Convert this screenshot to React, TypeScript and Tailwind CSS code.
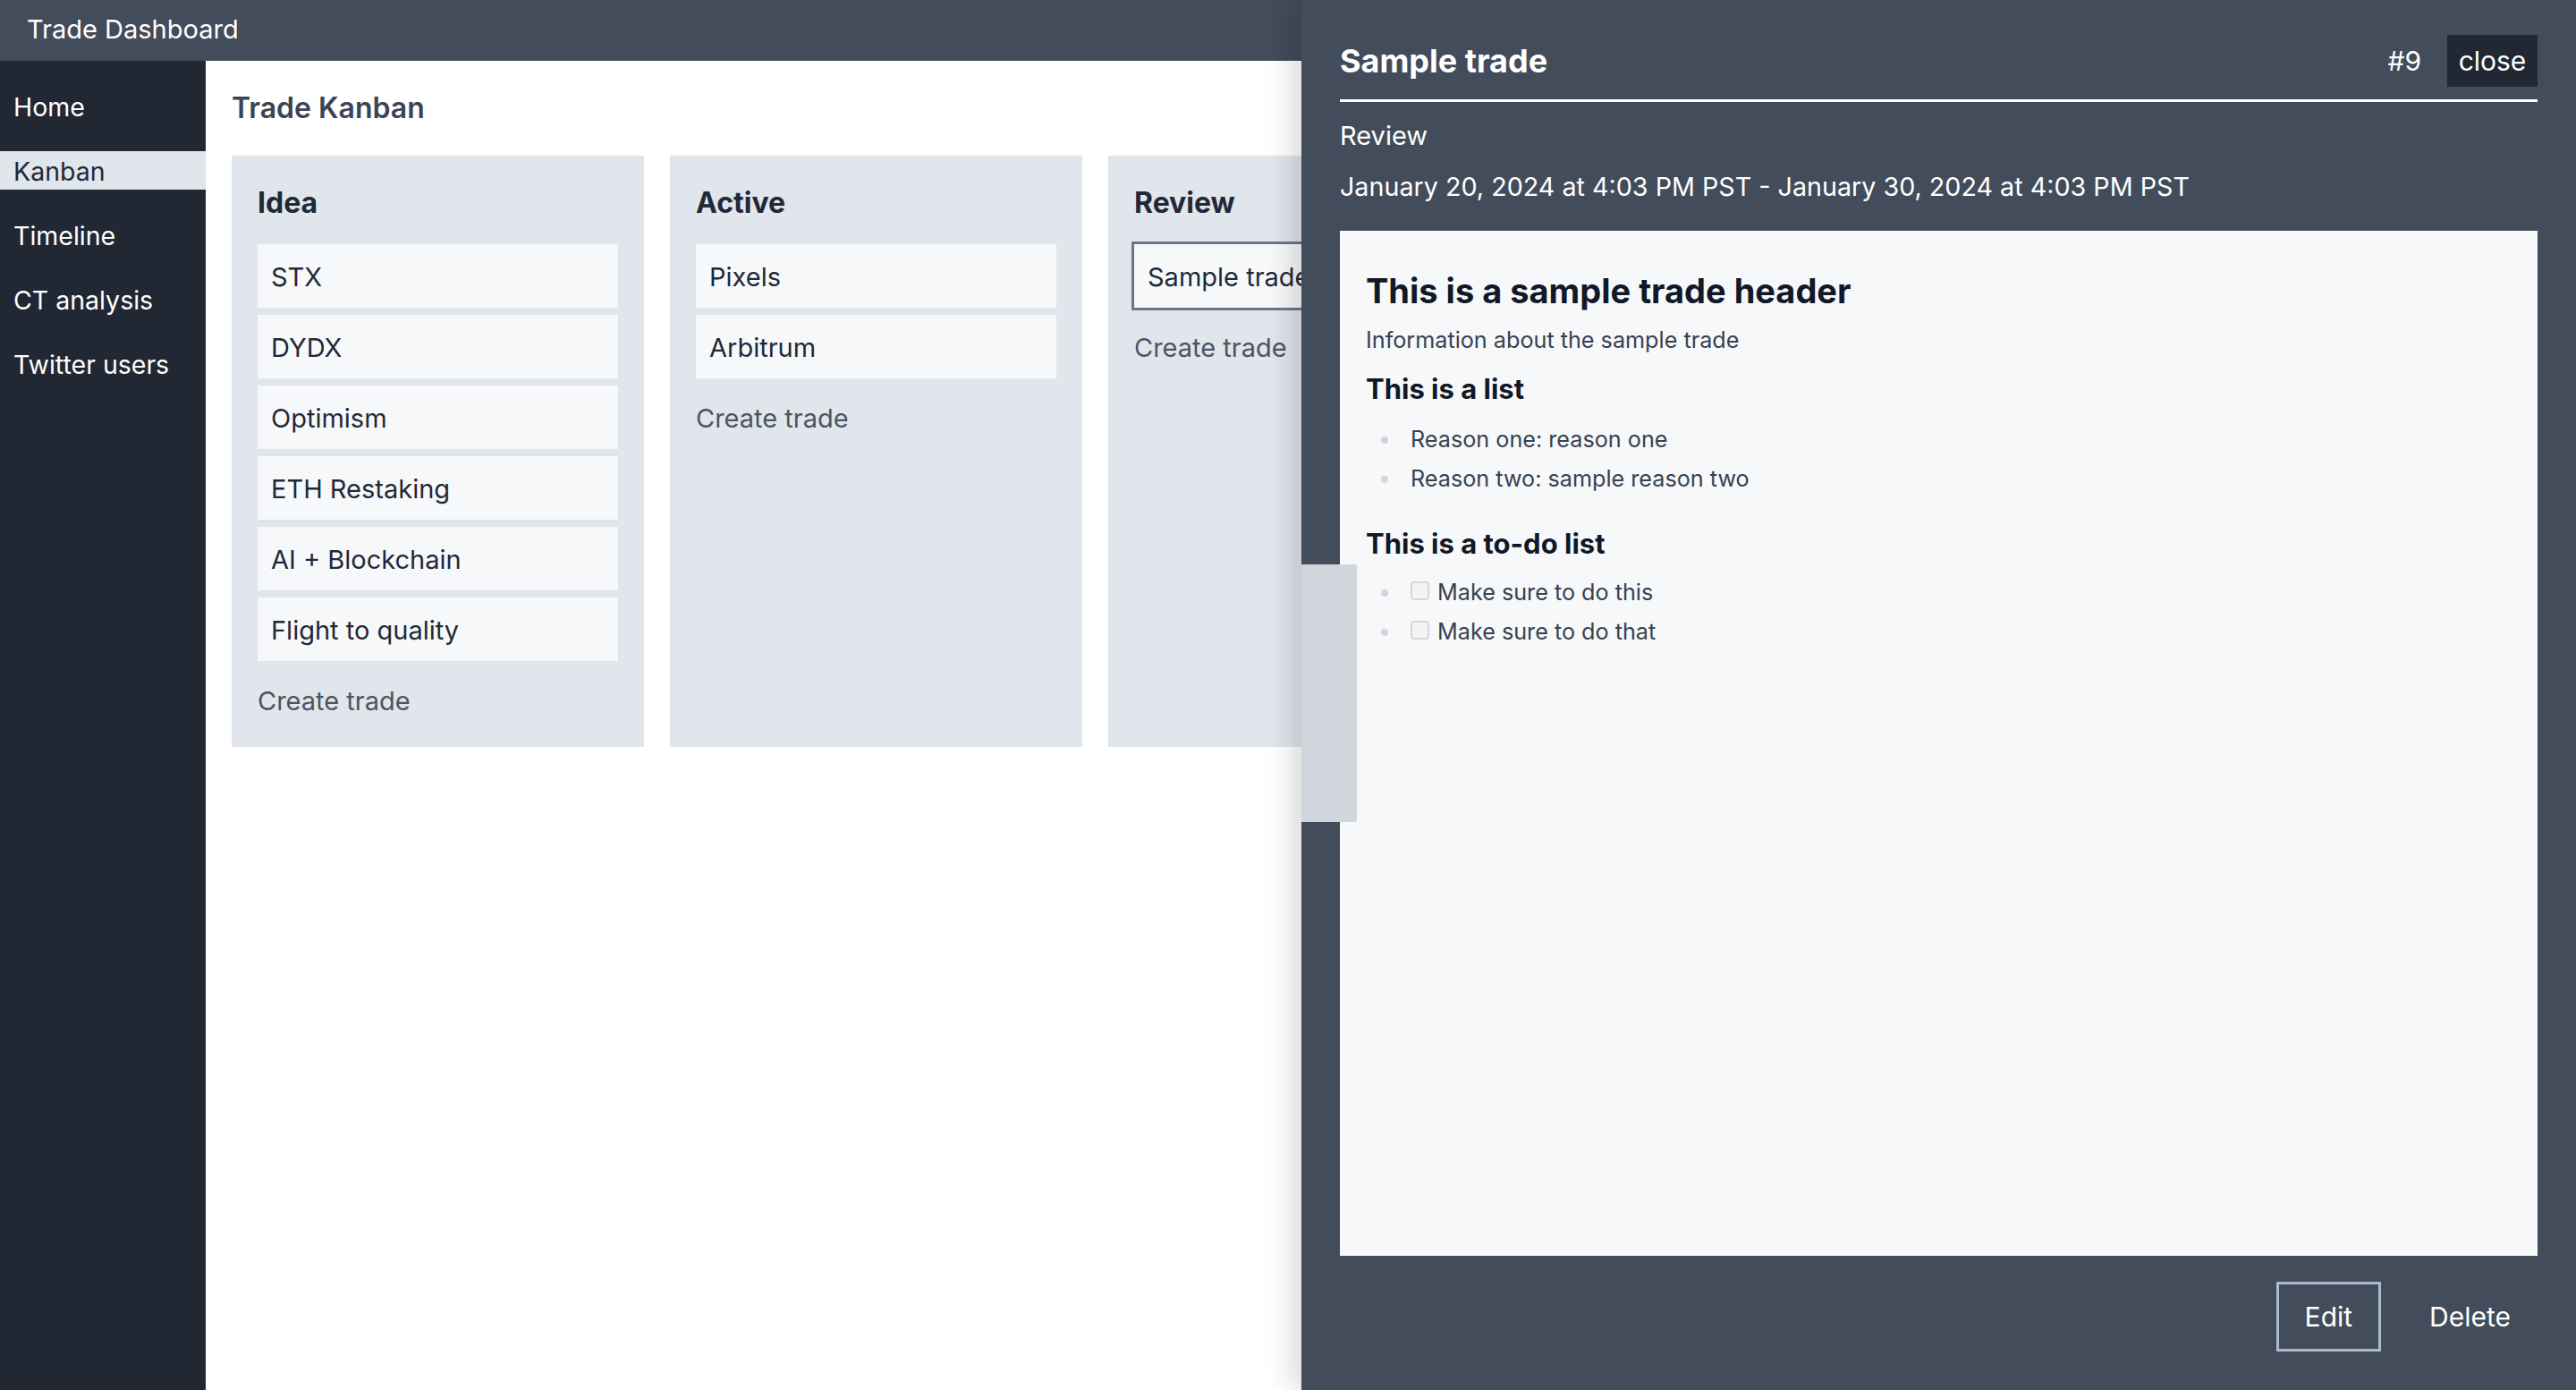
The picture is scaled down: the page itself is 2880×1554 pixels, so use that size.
import type { ReactNode } from 'react'

const navItems = ['Home', 'Kanban', 'Timeline', 'CT analysis', 'Twitter users']

interface Column {
  title: string
  trades: string[]
  selected?: string
}

const columns: Column[] = [
  {
    title: 'Idea',
    trades: ['STX', 'DYDX', 'Optimism', 'ETH Restaking', 'AI + Blockchain', 'Flight to quality'],
  },
  { title: 'Active', trades: ['Pixels', 'Arbitrum'] },
  { title: 'Review', trades: ['Sample trade'], selected: 'Sample trade' },
]

function Sidebar() {
  return (
    <nav className="w-[230px] shrink-0 bg-[#212833] pt-[29px] flex flex-col gap-[29px]">
      {navItems.map((item) => (
        <div
          key={item}
          className={
            item === 'Kanban'
              ? 'h-[43px] leading-[45px] pl-[15px] text-[28.5px] bg-[#e1e5ec] text-[#1f2937]'
              : 'h-[43px] leading-[45px] pl-[15px] text-[28.5px] text-white'
          }
        >
          {item}
        </div>
      ))}
    </nav>
  )
}

function KanbanColumn({ column }: { column: Column }) {
  return (
    <div className="w-[461px] shrink-0 bg-[#e1e5ec] p-[29px]">
      <h2 className="h-[45px] leading-[48px] mb-[25px] text-[32px] font-bold text-[#1f2937]">
        {column.title}
      </h2>
      <div className="flex flex-col gap-[8px]">
        {column.trades.map((t) => (
          <div
            key={t}
            className={
              column.selected === t
                ? 'h-[71px] flex items-center px-[15px] pt-[2px] bg-[#f7f8fa] text-[29px] text-[#1f2937] ring-[3px] ring-[#6b7787]'
                : 'h-[71px] flex items-center px-[15px] pt-[2px] bg-[#f7f8fa] text-[29px] text-[#1f2937]'
            }
          >
            {t}
          </div>
        ))}
      </div>
      <div className="mt-[23px] h-[44px] leading-[44px] text-[29px] text-[#4b5563]">Create trade</div>
    </div>
  )
}

function Bullet({ children }: { children: ReactNode }) {
  return (
    <li className="h-[44px] flex items-center">
      <span className="ml-[17px] w-[8px] h-[8px] rounded-full bg-[#d1d5dc] shrink-0" />
      <span className="ml-[25px] flex items-center">{children}</span>
    </li>
  )
}

function TodoBox() {
  return (
    <span className="w-[21px] h-[21px] mr-[9px] -mt-[4px] rounded-[4px] border-2 border-[#d6d8dc] bg-[#f4f4f5] shrink-0" />
  )
}

function TradePanel() {
  return (
    <aside className="absolute top-0 right-0 h-full w-[1425px] bg-[#434c5a] flex flex-col px-[43px] pt-[39px] pb-[43px] shadow-[-12px_0_28px_rgba(0,0,0,0.14)]">
      <div className="h-[58px] flex items-center justify-between">
        <h1 className="text-[36px] font-bold text-white">Sample trade</h1>
        <div className="flex items-center gap-[29px]">
          <span className="text-[30px] text-white">#9</span>
          <button className="w-[101px] h-[58px] bg-[#212833] text-[30px] text-white">close</button>
        </div>
      </div>
      <div className="mt-[14px] h-[3px] bg-white" />
      <div className="mt-[17px] h-[42px] leading-[42px] text-[29px] text-white">Review</div>
      <div className="mt-[15px] h-[42px] leading-[42px] text-[28.7px] text-white">
        January 20, 2024 at 4:03 PM PST - January 30, 2024 at 4:03 PM PST
      </div>

      <div className="mt-[28px] flex-1 bg-[#f7f8fa] pt-[43px] px-[29px] text-[#374151]">
        <h3 className="h-[48px] leading-[48px] text-[38px] font-bold text-[#111827]">
          This is a sample trade header
        </h3>
        <p className="mt-[13px] h-[36px] leading-[36px] text-[25.2px]">Information about the sample trade</p>
        <h4 className="mt-[16px] h-[42px] leading-[42px] text-[31px] font-bold text-[#111827]">This is a list</h4>
        <ul className="mt-[14px] text-[25.2px]">
          <Bullet>Reason one: reason one</Bullet>
          <Bullet>Reason two: sample reason two</Bullet>
        </ul>
        <h4 className="mt-[29px] h-[42px] leading-[42px] text-[31px] font-bold text-[#111827]">
          This is a to-do list
        </h4>
        <ul className="mt-[12px] text-[25.2px]">
          <Bullet>
            <TodoBox />
            Make sure to do this
          </Bullet>
          <Bullet>
            <TodoBox />
            Make sure to do that
          </Bullet>
        </ul>
      </div>

      <div className="mt-[29px] flex justify-end gap-[24px]">
        <button className="h-[78px] px-[29px] border-[3px] border-[#adbccb] text-[30px] text-white">Edit</button>
        <button className="h-[78px] px-[30px] text-[30px] text-white">Delete</button>
      </div>

      {/* drag handle sitting over the panel edge */}
      <div className="absolute left-0 top-[631px] w-[62px] h-[288px] bg-[#d1d5dc]" />
    </aside>
  )
}

export default function App() {
  return (
    <div className="relative h-screen w-full overflow-hidden flex flex-col font-['Inter',sans-serif]">
      <header className="h-[68px] shrink-0 bg-[#434c5a] pl-[30px] pb-[2px] flex items-center text-[29px] text-white">
        Trade Dashboard
      </header>
      <div className="flex-1 flex">
        <Sidebar />
        <main className="flex-1 bg-white pl-[29px] pt-[30px]">
          <h1 className="h-[44px] leading-[46px] mb-[32px] text-[32px] font-semibold text-[#3b4453]">Trade Kanban</h1>
          <div className="flex gap-[29px]">
            {columns.map((c) => (
              <KanbanColumn key={c.title} column={c} />
            ))}
          </div>
        </main>
      </div>
      <TradePanel />
    </div>
  )
}
